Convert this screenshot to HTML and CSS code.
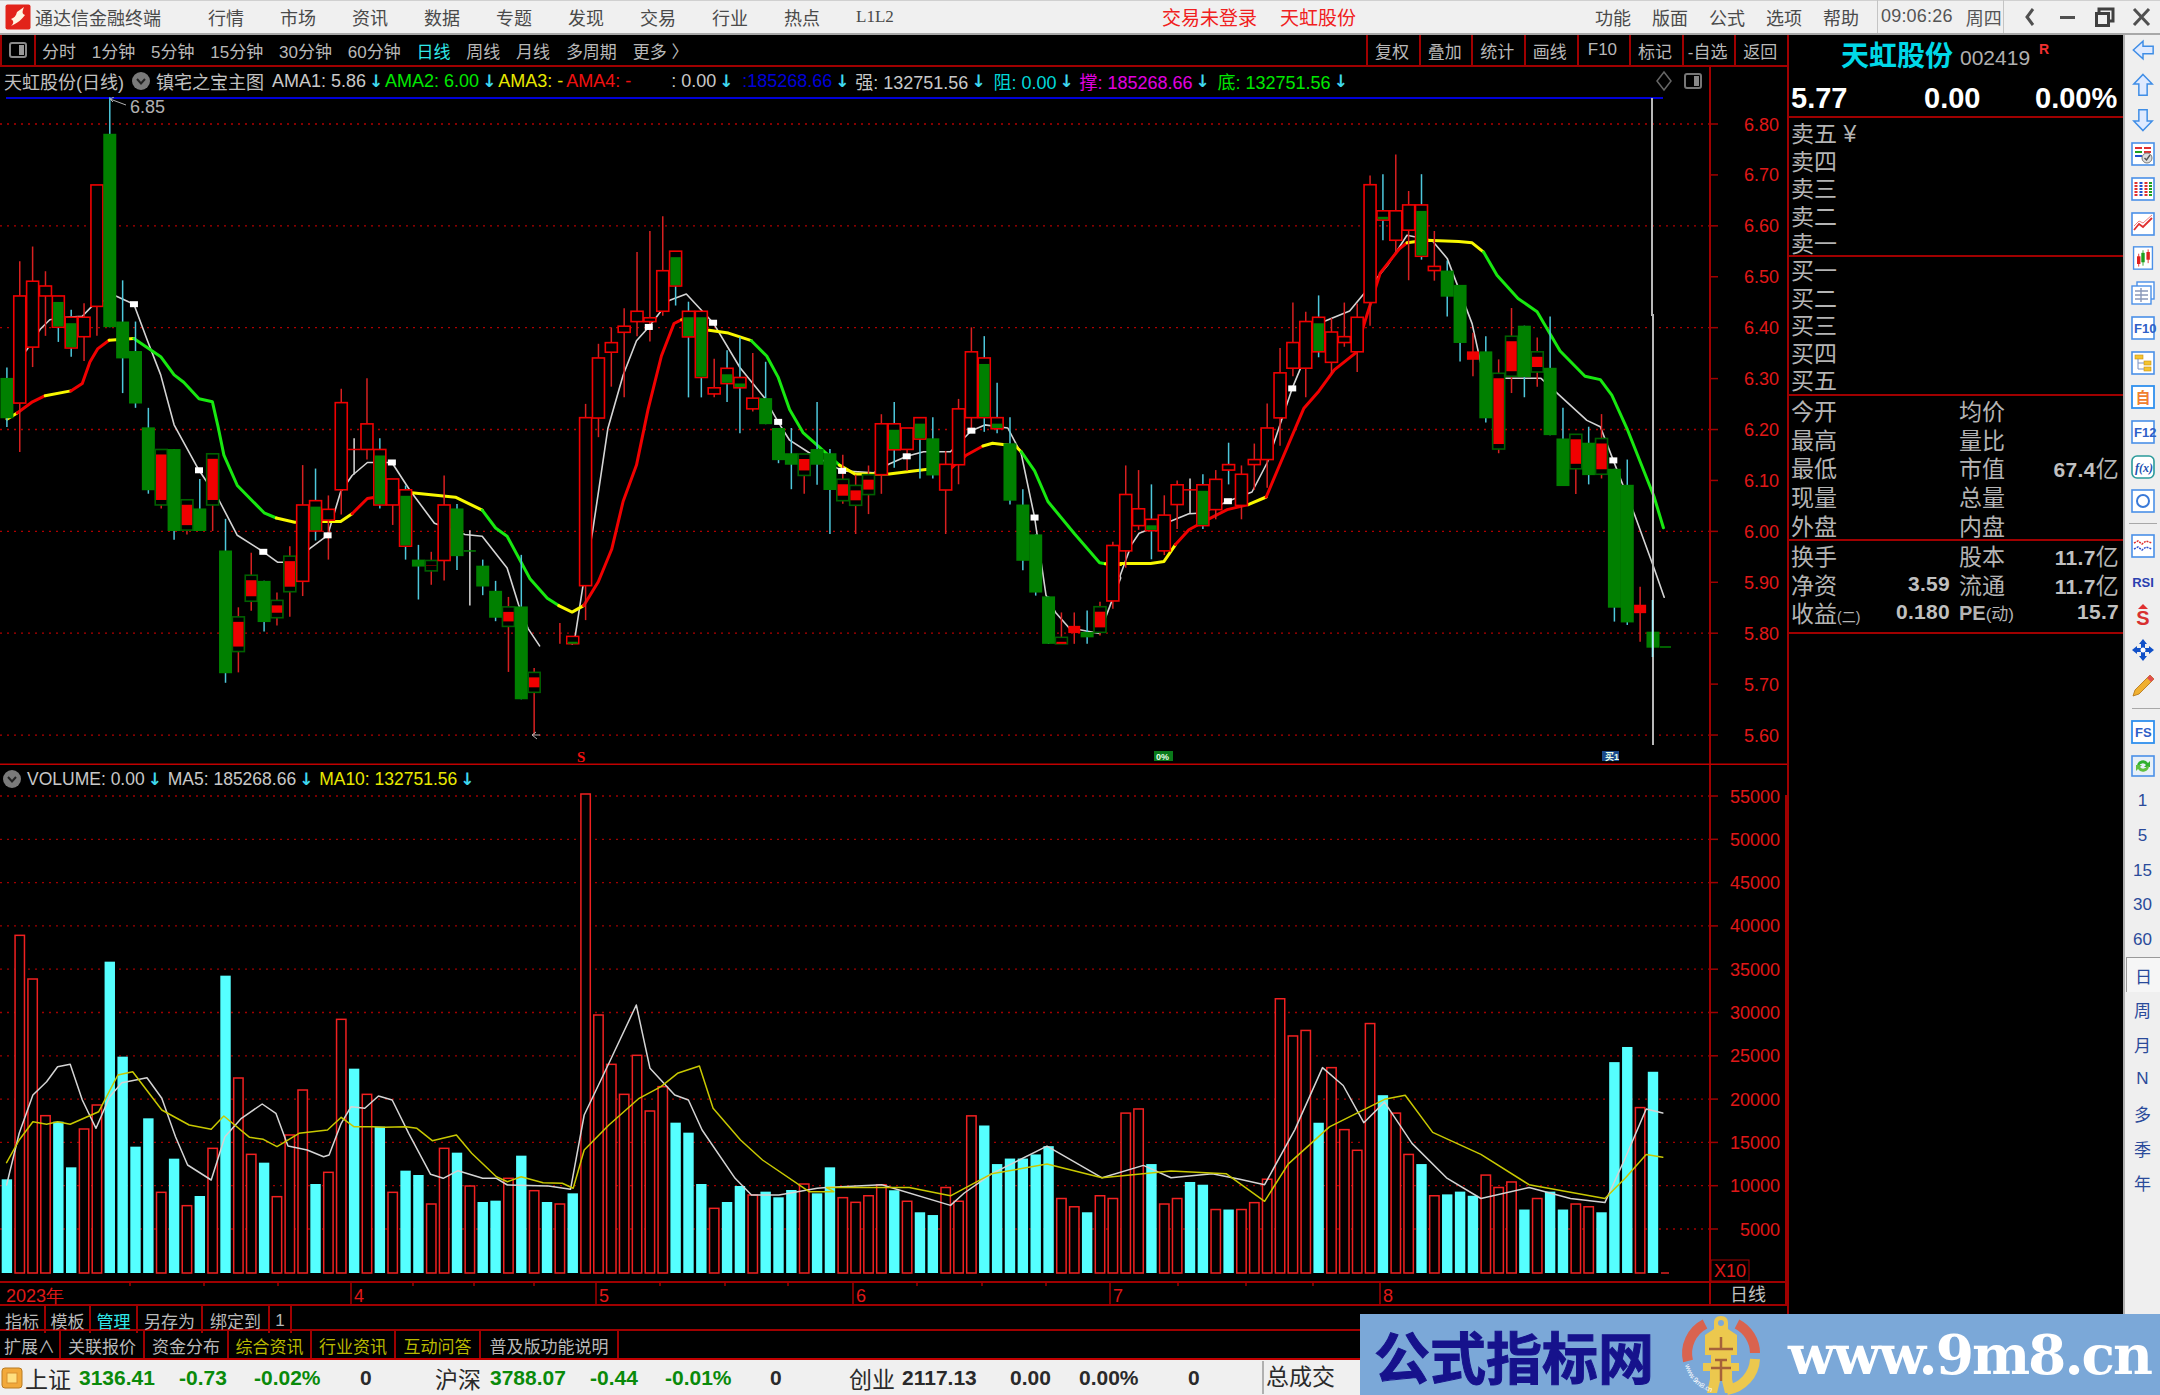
FILE: index.html
```html
<!DOCTYPE html>
<html lang="zh">
<head>
<meta charset="utf-8">
<title>通达信金融终端</title>
<link rel="stylesheet" href="styles.css">
</head>
<body>
<div class="app">
  <header class="titlebar">
    <svg class="applogo" viewBox="0 0 26 26"><rect x="0.5" y="0.5" width="25" height="25" rx="2" fill="#e2231a"/><path d="M6 15 C9 14 11 12 12 8 L19 3 C17 8 17 10 20 11 C17 15 13 19 6 22 C9 19 9 17 6 15Z" fill="#fff4e0"/></svg>
    <span class="brand">通达信金融终端</span>
    <nav class="menu">
      <span>行情</span><span>市场</span><span>资讯</span><span>数据</span><span>专题</span><span>发现</span><span>交易</span><span>行业</span><span>热点</span><span class="serif">L1L2</span>
    </nav>
    <div class="redinfo"><span>交易未登录</span><span>天虹股份</span></div>
    <nav class="menu2"><span>功能</span><span>版面</span><span>公式</span><span>选项</span><span>帮助</span></nav>
    <div class="clock"><span>09:06:26</span><span>周四</span></div>
    <div class="winctl">
      <svg viewBox="0 0 37 30"><path d="M21 7 L15 15 L21 23" fill="none" stroke="#505050" stroke-width="3"/></svg>
      <svg viewBox="0 0 37 30"><rect x="11" y="14" width="15" height="3" fill="#505050"/></svg>
      <svg viewBox="0 0 37 30"><path d="M13 11 V7 H27 V19 H23" fill="none" stroke="#404040" stroke-width="3"/><rect x="10.5" y="11.5" width="12" height="12" fill="none" stroke="#404040" stroke-width="3"/></svg>
      <svg viewBox="0 0 37 30"><path d="M11 7 L26 23 M26 7 L11 23" fill="none" stroke="#505050" stroke-width="3"/></svg>
    </div>
  </header>

  <div class="workspace">
    <section class="left">
      <div class="periodbar">
        <div class="toggle"><svg viewBox="0 0 20 20"><rect x="2" y="3" width="16" height="14" rx="2" fill="none" stroke="#8a8a8a" stroke-width="2"/><rect x="11" y="5" width="5" height="10" fill="#9a9a9a"/></svg></div>
        <div class="periods">
          <span>分时</span><span>1分钟</span><span>5分钟</span><span>15分钟</span><span>30分钟</span><span>60分钟</span><span class="on">日线</span><span>周线</span><span>月线</span><span>多周期</span><span>更多 〉</span>
        </div>
        <div class="tools"><span>复权</span><span>叠加</span><span>统计</span><span>画线</span><span>F10</span><span>标记</span><span>-自选</span><span>返回</span></div>
      </div>

      <div class="hdr">
        <span class="stock">天虹股份(日线)</span>
        <svg class="chev" viewBox="0 0 18 18"><circle cx="9" cy="9" r="9" fill="#7a7a7a"/><path d="M5 7 L9 11.5 L13 7" fill="none" stroke="#222" stroke-width="2"/></svg>
        <span class="stock s2">镇宅之宝主图</span>
        <span class="ind m8 grey">AMA1: 5.86<i class="dn">↓</i></span>
        <span class="ind m8 lime">AMA2: 6.00<i class="dn">↓</i></span>
        <span class="ind m8 yel">AMA3: -</span>
        <span class="ind m3 red">AMA4: -</span>
        <span class="ind m40 grey">: 0.00<i class="dn">↓</i></span>
        <span class="ind m15 blue">:185268.66<i class="dn">↓</i></span>
        <span class="ind m12 grey">强: 132751.56<i class="dn">↓</i></span>
        <span class="ind m14 cyan">阻: 0.00<i class="dn">↓</i></span>
        <span class="ind m12 mag">撑: 185268.66<i class="dn">↓</i></span>
        <span class="ind m14 lime">底: 132751.56<i class="dn">↓</i></span>
        <span class="hdrtools">
          <svg viewBox="0 0 18 22" class="dia"><path d="M9 2 L16 11 L9 20 L2 11 Z" fill="none" stroke="#666" stroke-width="1.5"/></svg>
          <svg viewBox="0 0 20 20" class="pane"><rect x="2" y="3" width="16" height="14" rx="2" fill="none" stroke="#777" stroke-width="2"/><rect x="11" y="5" width="5" height="10" fill="#888"/></svg>
        </span>
      </div>

      <svg class="pricepane" id="price" viewBox="0 97 1787 668" width="1787" height="668"></svg>

      <div class="hdr volhdr">
        <svg class="chev c1" viewBox="0 0 18 18"><circle cx="9" cy="9" r="9" fill="#7a7a7a"/><path d="M5 7 L9 11.5 L13 7" fill="none" stroke="#222" stroke-width="2"/></svg>
        <span class="ind m6 grey">VOLUME: 0.00<i class="dn">↓</i></span>
        <span class="ind m12 grey">MA5: 185268.66<i class="dn">↓</i></span>
        <span class="ind m12 yel">MA10: 132751.56<i class="dn">↓</i></span>
      </div>

      <svg class="volpane" id="vol" viewBox="0 795 1787 511" width="1787" height="511"></svg>

      <div class="tabs tabs1">
        <span>指标</span><span>模板</span><span class="act">管理</span><span>另存为</span><span>绑定到</span><span>1</span>
      </div>
      <div class="tabs tabs2">
        <span>扩展∧</span><span>关联报价</span><span>资金分布</span><span class="ol">综合资讯</span><span class="ol">行业资讯</span><span class="ol">互动问答</span><span>普及版功能说明</span>
      </div>
    </section>

    <aside class="panel">
      <div class="ptitle"><span class="pname">天虹股份</span><span class="pcode">002419</span><span class="pr">R</span></div>
      <div class="pquote psec"><span>5.77</span><span>0.00</span><span>0.00%</span></div>
      <div class="psec plist sell"><div>卖五 <span class="yen">¥</span></div><div>卖四</div><div>卖三</div><div>卖二</div><div>卖一</div></div>
      <div class="psec plist buy"><div>买一</div><div>买二</div><div>买三</div><div>买四</div><div>买五</div></div>
      <div class="psec pinfo">
        <span>今开</span><b></b><span>均价</span><b></b>
        <span>最高</span><b></b><span>量比</span><b></b>
        <span>最低</span><b></b><span>市值</span><b>67.4<em>亿</em></b>
        <span>现量</span><b></b><span>总量</span><b></b>
        <span>外盘</span><b></b><span>内盘</span><b></b>
      </div>
      <div class="psec pinfo last">
        <span>换手</span><b></b><span>股本</span><b>11.7<em>亿</em></b>
        <span>净资</span><b>3.59</b><span>流通</span><b>11.7<em>亿</em></b>
        <span>收益<small class="par">(二)</small></span><b>0.180</b><span class="pe">PE<small class="par2">(动)</small></span><b>15.7</b>
      </div>
    </aside>

    <aside class="sidebar">
      <div class="ti"><svg class="ic" viewBox="0 0 24 26"><path d="M1.5 13 L12 3.5 V9 H23 V17 H12 V22.5 Z" fill="#dfeaff" stroke="#3f8de6" stroke-width="1.6"/></svg></div>
      <div class="ti"><svg class="ic" viewBox="0 0 24 26"><path d="M12 1.5 L22 12 H16.5 V24 H7.5 V12 H2 Z" fill="#dfeaff" stroke="#3f8de6" stroke-width="1.6"/></svg></div>
      <div class="ti"><svg class="ic" viewBox="0 0 24 26"><path d="M12 24.5 L22 14 H16.5 V2 H7.5 V14 H2 Z" fill="#dfeaff" stroke="#3f8de6" stroke-width="1.6"/></svg></div>
      <div class="ti"><svg class="ic" viewBox="0 0 24 24"><rect x="1" y="1" width="22" height="22" fill="#fff" stroke="#4a90e8" stroke-width="1.6"/><path d="M4 6 H11 M13 6 H20" stroke="#e03030" stroke-width="2"/><path d="M4 10 H11" stroke="#20a020" stroke-width="2"/><path d="M13 10 H20" stroke="#e03030" stroke-width="2"/><path d="M4 14 H11" stroke="#2050d0" stroke-width="2"/><circle cx="16" cy="16" r="5" fill="#ddd" stroke="#777"/><path d="M13.5 16 L15.5 18 L19 13" fill="none" stroke="#555" stroke-width="1.4"/></svg></div>
      <div class="ti"><svg class="ic" viewBox="0 0 24 24"><rect x="1" y="1" width="22" height="22" fill="#fff" stroke="#4a90e8" stroke-width="1.6"/><path d="M5 5 V19" stroke="#e03030" stroke-width="3" stroke-dasharray="2 1"/><path d="M10 5 V19" stroke="#2050d0" stroke-width="3" stroke-dasharray="2 1"/><path d="M15 5 V19" stroke="#e03030" stroke-width="3" stroke-dasharray="2 1"/><path d="M19.500 5 V19" stroke="#20a020" stroke-width="3" stroke-dasharray="2 1"/></svg></div>
      <div class="ti"><svg class="ic" viewBox="0 0 24 24"><rect x="1" y="1" width="22" height="22" fill="#fff" stroke="#4a90e8" stroke-width="1.6"/><path d="M3 18 L8 12 L12 15 L21 6" fill="none" stroke="#e03030" stroke-width="1.8"/><path d="M3 14 L8 9 L12 11 L21 3" fill="none" stroke="#f08080" stroke-width="1"/></svg></div>
      <div class="ti"><svg class="ic" viewBox="0 0 24 28"><rect x="1" y="1" width="22" height="26" fill="#fff" stroke="#4a90e8" stroke-width="1.6"/><rect x="5" y="12" width="4" height="9" fill="#e02020"/><path d="M7 9 V24" stroke="#e02020"/><rect x="10" y="8" width="4" height="11" fill="#20a020"/><path d="M12 5 V23" stroke="#20a020"/><rect x="16" y="7" width="4" height="9" fill="#e02020"/><path d="M18 4 V20" stroke="#e02020"/></svg></div>
      <div class="ti"><svg class="ic" viewBox="0 0 24 24"><rect x="6" y="1" width="17" height="17" fill="#fff" stroke="#4a90e8" stroke-width="1.4"/><rect x="1" y="5" width="19" height="18" fill="#fff" stroke="#4a90e8" stroke-width="1.4"/><path d="M4 10 H17 M4 14 H17 M4 18 H17 M10 7 V21" stroke="#8a98b8" stroke-width="1.4"/></svg></div>
      <div class="ti"><svg class="ic" viewBox="0 0 24 24"><rect x="1" y="1" width="22" height="22" fill="#fff" stroke="#4a90e8" stroke-width="1.6"/><text x="3" y="17" class="ictext">F10</text></svg></div>
      <div class="ti"><svg class="ic" viewBox="0 0 24 24"><rect x="1" y="1" width="22" height="22" fill="#fff" stroke="#4a90e8" stroke-width="1.6"/><rect x="4" y="4" width="8" height="4" fill="#f4c430" stroke="#c89010" stroke-width=".6"/><rect x="13" y="10" width="7" height="4" fill="#f4c430" stroke="#c89010" stroke-width=".6"/><rect x="13" y="16" width="7" height="4" fill="#f4c430" stroke="#c89010" stroke-width=".6"/><path d="M7 8 V18 H13 M7 12 H13" fill="none" stroke="#7a90c0"/></svg></div>
      <div class="ti"><svg class="ic" viewBox="0 0 24 24"><rect x="1" y="1" width="22" height="22" fill="#fff" stroke="#2f90ee" stroke-width="1.8"/><text x="12" y="18" class="icself">自</text></svg></div>
      <div class="ti"><svg class="ic" viewBox="0 0 24 24"><rect x="1" y="1" width="22" height="22" fill="#fff" stroke="#4a90e8" stroke-width="1.6"/><text x="3" y="17" class="ictext">F12</text></svg></div>
      <div class="ti"><svg class="ic" viewBox="0 0 24 24"><rect x="1" y="1" width="22" height="22" rx="5" fill="#fff" stroke="#2a9a9a" stroke-width="1.6"/><text x="4" y="17" class="icfx">f(x)</text></svg></div>
      <div class="ti"><svg class="ic" viewBox="0 0 24 24"><rect x="1" y="1" width="22" height="22" fill="#fff" stroke="#4a90e8" stroke-width="1.6"/><circle cx="12" cy="12" r="6" fill="none" stroke="#3a7ad8" stroke-width="2"/></svg></div>
      <div class="tsep s1"></div>
      <div class="ti"><svg class="ic" viewBox="0 0 24 24"><rect x="1" y="1" width="22" height="22" fill="#fff" stroke="#4a90e8" stroke-width="1.6"/><path d="M3 9 L7 7 L11 10 L15 7 L21 9" fill="none" stroke="#e03030" stroke-width="1.5" stroke-dasharray="2 1"/><path d="M3 15 L7 13 L11 16 L15 13 L21 15" fill="none" stroke="#3050d0" stroke-width="1.5" stroke-dasharray="2 1"/></svg></div>
      <div class="ti"><svg class="ic" viewBox="0 0 24 24"><text x="12" y="18" class="icrsi">RSI</text></svg></div>
      <div class="ti"><svg class="ic" viewBox="0 0 24 24"><path d="M12 1 L17 6 H7 Z" fill="#e03030"/><text x="12" y="22" class="ics">S</text></svg></div>
      <div class="ti"><svg class="ic" viewBox="0 0 24 24"><path d="M12 1 L16 6 H14 V10 H18 V8 L23 12 L18 16 V14 H14 V18 H16 L12 23 L8 18 H10 V14 H6 V16 L1 12 L6 8 V10 H10 V6 H8 Z" fill="#1050c8"/><circle cx="12" cy="12" r="2.500" fill="#fff"/></svg></div>
      <div class="ti"><svg class="ic" viewBox="0 0 24 24"><path d="M19 2 L23 6 L8 21 L2 23 L4 17 Z" fill="#f0b030" stroke="#b07010" stroke-width=".8"/><path d="M19 2 L23 6 L20 9 L16 5 Z" fill="#e05050"/></svg></div>
      <div class="tsep s2"></div>
      <div class="ti"><svg class="ic" viewBox="0 0 24 24"><rect x="1" y="1" width="22" height="22" fill="#fff" stroke="#2f90ee" stroke-width="1.8"/><text x="4" y="17" class="ictext">FS</text></svg></div>
      <div class="ti"><svg class="ic" viewBox="0 0 24 24"><rect x="1" y="1" width="22" height="20" fill="#e8f0f8" stroke="#4a90e8" stroke-width="1.6"/><path d="M6 11 A6 6 0 0 1 17 8 L19 6 V12 H13 L15 10 A4 4 0 0 0 8 11 Z" fill="#30b030"/><path d="M18 11 A6 6 0 0 1 7 14 L5 16 V10 H11 L9 12 A4 4 0 0 0 16 11 Z" fill="#60c040"/></svg></div>
      <div class="ti txt">1</div><div class="ti txt">5</div><div class="ti txt">15</div><div class="ti txt">30</div><div class="ti txt">60</div>
      <div class="ti txt day">日</div><div class="ti txt">周</div><div class="ti txt">月</div><div class="ti txt">N</div><div class="ti txt">多</div><div class="ti txt">季</div><div class="ti txt">年</div>
    </aside>
  </div>

  <footer class="status">
    <svg class="sicon" viewBox="0 0 22 22"><rect x="1" y="1" width="20" height="20" rx="3" fill="#f2a93a" stroke="#b87a20"/><rect x="6" y="6" width="10" height="10" fill="#ffe080" stroke="#d89030"/></svg>
    <span class="nm">上证</span><span class="up">3136.41</span><span class="up">-0.73</span><span class="up">-0.02%</span><span class="dk">0</span>
    <span class="nm">沪深</span><span class="up">3788.07</span><span class="up">-0.44</span><span class="up">-0.01%</span><span class="dk">0</span>
    <span class="nm">创业</span><span class="dk">2117.13</span><span class="dk">0.00</span><span class="dk">0.00%</span><span class="dk">0</span>
    <span class="nm tot">总成交</span>
  </footer>

  <div class="watermark">
    <span class="wmtitle">公式指标网</span>
    <svg class="wmlogo" viewBox="0 0 80 80">
      <path d="M7 46 A33 33 0 0 1 24 9" fill="none" stroke="#d9634f" stroke-width="10"/>
      <path d="M56 9 A33 33 0 0 1 74 38" fill="none" stroke="#d9634f" stroke-width="10"/>
      <path d="M74 44 A33 33 0 0 1 46 75" fill="none" stroke="#ecc84e" stroke-width="10"/>
      <path d="M40 1 C35 1 33 4 33 8 V14 L24 20 V40 H30 V48 H22 V56 H29 V64 L26 78 H36 L40 62 L44 78 H54 L51 64 V56 H58 V48 H50 V40 H56 V20 L47 14 V8 C47 4 45 1 40 1Z" fill="#ecc84e"/>
      <circle cx="40" cy="8" r="3" fill="#7ba8d8"/>
      <path d="M28 34 H52 M40 22 V34 M34 45 H46 M30 53 H50 M40 45 V66" fill="none" stroke="#a5623a" stroke-width="2.500"/>
      <path id="wmarc" d="M4 50 A37 37 0 0 0 30 77" fill="none"/>
      <text class="wmsmall"><textPath href="#wmarc">www.9m8.cn</textPath></text>
    </svg>
    <span class="wmurl">www.9m8.cn</span>
  </div>
</div>
<script src="chart.js"></script>
</body>
</html>
```
FILE: styles.css
```css
html,body{margin:0;padding:0;background:#000;}
.app{position:relative;width:2160px;height:1395px;overflow:hidden;background:#000;font-family:"Liberation Sans","Noto Sans CJK SC",sans-serif;font-size:18px;color:#c0c0c0;}
svg{display:block;}

.titlebar{display:flex;align-items:center;box-sizing:border-box;height:35px;padding-bottom:1px;background:#f0f0f0;border-top:1px solid #d0d0d0;border-bottom:2px solid #a8a8a8;color:#4a4a4a;font-size:18px;white-space:nowrap;}
.applogo{width:26px;height:26px;margin-left:5px;flex:none;}
.brand{margin-left:4px;width:126px;}
.menu{display:flex;align-items:center;gap:36px;margin-left:47px;width:684px;}
.menu span{width:36px;}
.serif{font-family:"Liberation Serif",serif;font-size:17px;}
.redinfo{display:flex;gap:23px;margin-left:270px;color:#f02020;font-size:19px;}
.menu2{display:flex;gap:21px;margin-left:auto;}
.clock{display:flex;align-items:center;gap:13px;margin-left:18px;height:33px;border-left:1px solid #c4c4c4;border-right:1px solid #c4c4c4;padding:0 3px;color:#555;width:119px;box-sizing:content-box;}
.clock span:first-child{letter-spacing:.2px;}
.winctl{display:flex;margin-left:8px;}
.winctl svg{width:37px;height:30px;}

.workspace{display:flex;height:1325px;}
.left{width:1787px;flex:none;}
.periodbar{display:flex;box-sizing:border-box;height:32px;border-bottom:2px solid #a00000;}
.toggle{box-sizing:border-box;width:36px;border-left:2px solid #a00000;border-right:2px solid #a00000;display:flex;align-items:center;justify-content:center;}
.toggle svg{width:20px;height:20px;}
.periods{display:flex;gap:15.800px;margin-left:6px;align-items:center;font-size:17px;color:#b8b8b8;white-space:nowrap;}
.periods .on{color:#30e8e8;}
.tools{display:flex;margin-left:auto;font-size:17px;color:#b8b8b8;}
.tools span{box-sizing:border-box;width:52.6px;padding-right:3px;border-left:2px solid #a00000;display:flex;align-items:center;justify-content:center;white-space:nowrap;}

.hdr{display:flex;align-items:center;box-sizing:border-box;width:1711px;height:30px;border-right:2px solid #a00000;font-size:18px;white-space:nowrap;padding-left:4px;padding-bottom:2px;}
.stock{color:#c0c0c0;}
.s2{margin-left:6px;}
.chev{width:18px;height:18px;margin-left:8px;flex:none;}
.chev.c1{margin-left:-1px;}
.ind{display:flex;align-items:center;}
.dn{font-style:normal;font-weight:bold;color:#3fd8ee;width:8px;margin-left:3px;font-family:"DejaVu Sans",sans-serif;font-size:17px;text-align:center;}
.m3{margin-left:3px;}.m6{margin-left:6px;}.m8{margin-left:8px;}.m12{margin-left:12px;}.m14{margin-left:14px;}.m15{margin-left:15px;}.m40{margin-left:40px;}
.grey{color:#c8c8c8;}.lime{color:#00e800;}.yel{color:#e8e800;}.red{color:#f01010;}.blue{color:#0000d8;}.cyan{color:#00d8d8;}.mag{color:#e000e0;}
.hdrtools{display:flex;align-items:center;gap:10px;margin-left:auto;margin-right:6px;}
.dia{width:18px;height:22px;}
.pane{width:20px;height:20px;}
.pricepane{background:#000;}
.volpane{background:#000;overflow:visible;}
.volhdr{font-size:17.500px;}

.axis{fill:#e01818;font-size:18px;font-family:"Liberation Sans",sans-serif;}
.sig{font-family:"Liberation Serif",serif;font-weight:bold;font-size:15px;fill:#f01010;}
.lbl{fill:#b0b0b0;font-size:18px;font-family:"Liberation Sans",sans-serif;}
.tag{fill:#e8ffe8;font-size:9px;font-weight:bold;font-family:"Liberation Sans","Noto Sans CJK SC",sans-serif;}
.dayl{fill:#c0c0c0;font-size:18px;font-family:"Noto Sans CJK SC",sans-serif;}

.tabs{display:grid;box-sizing:border-box;border-bottom:2px solid #a00000;font-size:17px;color:#b8b8b8;white-space:nowrap;}
.tabs span{box-sizing:border-box;padding-top:2px;border-right:2px solid #a00000;display:flex;align-items:center;justify-content:center;}
.tabs1{height:25px;grid-template-columns:46px 45px 47px 65px 67px 22px;}
.tabs2{height:29px;grid-template-columns:61px 84px 84px 83px 84px 85px 138px;border-bottom-color:#c00000;}
.tabs .act{color:#30e8e8;}
.tabs .ol{color:#b8b800;}

.panel{box-sizing:border-box;width:336px;flex:none;border-left:2px solid #a00000;font-size:23px;color:#b4b4b4;}
.ptitle{display:flex;align-items:center;box-sizing:border-box;height:47px;padding-left:52px;padding-bottom:9px;white-space:nowrap;}
.pname{font-size:28px;font-weight:bold;color:#00d8e8;}
.pcode{font-size:21px;margin-left:7px;margin-top:8px;color:#b0b0b0;}
.pr{font-size:14px;font-weight:bold;color:#f03030;margin-left:9px;margin-top:-10px;}
.psec{box-sizing:border-box;border-bottom:2px solid #a00000;}
.pquote{display:grid;grid-template-columns:133px 111px 84px;height:36px;align-items:center;padding-left:2px;padding-bottom:2px;font-size:29px;font-weight:bold;color:#fff;}
.plist{height:139px;padding-left:2px;}
.sell{padding-top:3px;}
.buy{padding-top:1px;}
.plist div{height:27.500px;line-height:27.500px;}
.yen{color:#b4b4b4;}
.pinfo{display:grid;grid-template-columns:60px 99px 9px 60px 100px;grid-auto-rows:28.600px;align-items:center;padding-left:2px;height:145px;white-space:nowrap;}
.pinfo.last{height:93px;}
.pinfo span:nth-of-type(even){grid-column:4;}
.pinfo b{text-align:right;font-size:21px;color:#c0c0c0;letter-spacing:.3px;}
.pinfo b em{font-style:normal;font-weight:normal;font-size:23px;color:#b4b4b4;}
.par{font-size:14px;}
.pe{font-weight:bold;font-size:20px;}
.par2{font-size:17px;font-weight:normal;}

.sidebar{box-sizing:border-box;width:37px;flex:none;background:#efefef;border-left:2px solid #b0b0b0;}
.ti{height:34.700px;display:flex;align-items:center;justify-content:center;}
.ti:first-child{margin-top:-2px;}
.ic{width:24px;height:24px;overflow:visible;}
.tsep{display:flex;align-items:center;}
.tsep::after{content:"";display:block;width:28px;height:1px;margin:0 auto;background:#a8a8a8;}
.tsep.s1{height:10px;}
.tsep.s2{height:12.600px;}
.txt{color:#2a4a9a;font-size:17px;}
.day{background:#f6f6f6;border-top:1px solid #999;border-left:1px solid #999;box-sizing:border-box;margin-left:1px;}
.ictext{font-size:13px;font-weight:bold;fill:#2f60c8;font-family:"Liberation Sans",sans-serif;}
.icself{font-size:15px;font-weight:bold;fill:#f08030;text-anchor:middle;font-family:"Noto Sans CJK SC",sans-serif;}
.icfx{font-size:12px;font-style:italic;font-weight:bold;fill:#2050b0;font-family:"Liberation Serif",serif;}
.icrsi{font-size:13px;font-weight:bold;fill:#2a40b0;text-anchor:middle;font-family:"Liberation Sans",sans-serif;}
.ics{font-size:20px;font-weight:bold;fill:#d83030;text-anchor:middle;font-family:"Liberation Sans",sans-serif;}

.status{display:grid;grid-template-columns:25px 54px 100px 75px 106px 75px 55px 100px 75px 105px 79px 53px 108px 69px 109px 74px 1fr;align-items:center;height:35px;background:#f0f0f0;box-sizing:border-box;font-size:21px;font-weight:bold;white-space:nowrap;}
.sicon{width:22px;height:22px;margin-left:1px;}
.status .nm{font-size:23px;font-weight:normal;color:#2a2a2a;}
.up{color:#0a8a0a;}
.dk{color:#2a2a2a;}
.status .tot{border-left:2px solid #b0b0b0;padding-left:2px;height:33px;line-height:33px;}

.watermark{position:absolute;left:1360px;top:1314px;width:800px;height:81px;background:#7ba8d8;display:flex;align-items:center;white-space:nowrap;}
.wmtitle{font-family:"Noto Sans CJK SC",sans-serif;font-weight:bold;font-size:56px;line-height:81px;color:#16128c;margin-left:14px;-webkit-text-stroke:1px #16128c;}
.wmlogo{width:80px;height:80px;margin-left:27px;flex:none;overflow:visible;}
.wmsmall{font-size:7px;fill:#fff;font-family:"Liberation Sans",sans-serif;}
.wmurl{font-family:"DejaVu Serif",serif;font-weight:bold;font-size:55px;letter-spacing:-2px;color:#fff;margin-left:27px;line-height:81px;}
```
FILE: chart.js
```js
(function(){
var NS='http://www.w3.org/2000/svg';
function el(p,n,a,t){var e=document.createElementNS(NS,n);for(var k in a)e.setAttribute(k,a[k]);if(t!==undefined)e.textContent=t;p.appendChild(e);return e;}
var X=function(i){return 6.9+12.86*i;};
var zooms={
  a:{x:function(z){return z/2.613;},y:function(z){return 80+z/2.306;}},
  b:{x:function(z){return 560+z/2.613;},y:function(z){return 180+z/2.613;}},
  c:{x:function(z){return 1120+z/2.613;},y:function(z){return 130+z/2.376;}}
};
function pts(zk,arr){var z=zooms[zk],o=[];for(var i=0;i<arr.length;i+=2)o.push(z.x(arr[i]).toFixed(1)+','+z.y(arr[i+1]).toFixed(1));return o;}

/* candles: type, body top, body bottom, wick top, wick bottom */
var A=[['g',687,780,663,800],['r',498,745,418,858],['r',464,616,384,662],['r',475,498,441,590],['m',498,570,498,604],['m',547,618,530,638],['r',547,592,515,648],['r',242,522,242,590],['g',124,570,40,570],['g',557,642,462,722],['g',625,746,557,756],['g',801,946,756,954],['x',852,980,852,988],['g',851,1040,851,1060],['x',968,1038,968,1048],['g',988,1040,920,1040],['x',862,980,862,1040],['g',1085,1368,1012,1390],['x',1238,1318,1216,1366],['x',1142,1202,1090,1224],['g',1155,1250,1155,1272],['x',1200,1240,1182,1258],['x',1098,1180,1075,1238],['r',980,1156,888,1190],['m',970,1040,896,1062],['r',990,1015,958,1106],['r',744,945,712,1002],['dr',852,852,826,910],['r',793,852,688,875],['m',852,980,826,988],['r',920,980,920,1026],['m',945,1075,935,1106],['g',1106,1122,1072,1198],['x',1108,1132,1088,1164],['r',980,1108,912,1154],['g',988,1098,978,1130],['dg',1086,1086,1038,1212],['g',1120,1168,1106,1188],['g',1178,1240,1155,1248],['x',1215,1260,1192,1365],['g',1214,1428,1095,1428],['x',1366,1412,1356,1510],null,['w',1252,1300,1252,1300],['e',1283,1300,1283,1300]];
var B=[['r',621,1060,585,1150],['r',465,622,428,672],['r',425,450,385,540],['r',382,398,335,568],['r',343,370,188,408],['r',360,370,133,422],['r',237,343,95,355],['m',186,277,186,328],['m',343,410,318,568],['m',343,516,343,568],['r',543,559,467,568],['m',492,532,445,580],['m',516,543,410,662],['r',570,598,452,605],['g',570,638,475,638],['g',648,732,648,740],['g',714,744,648,808],['x',716,772,716,820],['g',703,744,580,796],['g',714,810,703,925],['x',782,838,718,846],['x',798,850,770,925],['x',770,822,746,873],['r',637,770,612,820],['m',637,705,580,752],['r',648,704,648,760],['m',621,677,621,780],['g',675,772,620,780],['r',743,810,708,925],['r',598,744,572,795],['r',449,621,385,655],['m',465,621,408,658],['m',621,650,530,662],['g',688,838,620,848],['g',848,995,808,1020],['g',926,1078,926,1086],['g',1088,1212,1088,1212],['e2',1195,1212,1130,1212],['f',1165,1184,1130,1212],['g',1181,1195,1125,1212],['x',1115,1182,1102,1190],['r',955,1100,945,1120]];
var C=[['r',866,1000,797,1040],['r',900,940,808,950],['m',925,952,842,1020],['r',915,1000,868,1010],['r',843,890,833,948],['dr',855,855,828,912],['m',843,940,818,948],['r',830,902,808,925],['m',795,808,743,842],['r',818,892,797,925],['r',783,795,745,855],['r',708,783,650,850],['r',577,684,518,750],['r',505,566,410,585],['r',455,566,432,635],['m',445,527,393,540],['r',480,552,447,578],['r',491,505,410,515],['r',445,527,412,575],['r',130,410,108,465],['m',192,214,105,262],['r',192,262,58,290],['r',178,238,145,357],['m',178,300,105,308],['r',324,334,240,358],['g',334,396,310,443],['g',368,506,368,550],['f',526,546,482,585],['g',526,685,490,695],['x',578,758,545,768],['x',490,585,423,625],['g',465,587,465,635],['x',527,575,493,610],['g',565,725,443,725],['g',733,846,660,846],['x',723,805,723,865],['g',743,820,705,842],['x',733,818,675,828],['g',805,1135,805,1168],['g',843,1170,783,1176],['f',1128,1148,1085,1216],['g',1192,1230,1118,1252]];

function drawCandle(g,i,c,zk){
  var z=zooms[zk].y,t=c[0],x=X(i),top=z(c[1]),bot=z(c[2]),wt=z(c[3]),wb=z(c[4]);
  var RED='#f00000',GRN='#008000',CY='#4ec8dc',WK='#d82020',DG='#006000';
  var w=12,h=Math.max(bot-top,0);
  if(t==='dr'||t==='dg'){
    el(g,'line',{x1:x,x2:x,y1:wt,y2:wb,stroke:'#d8d8d8','stroke-width':1.5});
    el(g,'line',{x1:x-6,x2:x+6,y1:top,y2:top,stroke:t==='dr'?RED:GRN,'stroke-width':1.5});
    return;
  }
  if(t==='w'){el(g,'line',{x1:x,x2:x,y1:wt,y2:wb,stroke:WK,'stroke-width':1.5});return;}
  var wc=(t==='g'||t==='m')?CY:WK;
  el(g,'line',{x1:x,x2:x,y1:wt,y2:wb,stroke:wc,'stroke-width':1.5});
  if(t==='g'){el(g,'rect',{x:x-6.5,y:top,width:13,height:h,fill:GRN});}
  else if(t==='f'){el(g,'rect',{x:x-6,y:top,width:12,height:h,fill:RED});}
  else if(t==='r'){el(g,'rect',{x:x-w/2,y:top,width:w,height:h,fill:'#000',stroke:RED,'stroke-width':1.6});}
  else if(t==='m'){
    el(g,'rect',{x:x-w/2,y:top,width:w,height:h,fill:'#000',stroke:RED,'stroke-width':1.6});
    el(g,'rect',{x:x-w/2+.8,y:top+6,width:w-1.6,height:Math.max(h-6.8,0),fill:GRN});
  }else if(t==='x'){
    el(g,'rect',{x:x-w/2,y:top,width:w,height:h,fill:'#000',stroke:DG,'stroke-width':1.6});
    el(g,'rect',{x:x-w/2+.8,y:top+5,width:w-1.6,height:Math.max(h-10,0),fill:RED});
  }else if(t==='e'||t==='e2'){
    el(g,'rect',{x:x-w/2,y:top,width:w,height:h,fill:'#000',stroke:t==='e'?RED:DG,'stroke-width':1.5});
    el(g,'rect',{x:x-w/2+1,y:bot-2,width:w-2,height:2,fill:t==='e'?GRN:RED});
  }
}

/* price pane */
var p=document.getElementById('price');
var labels=['6.80','6.70','6.60','6.50','6.40','6.30','6.20','6.10','6.00','5.90','5.80','5.70','5.60'];
labels.forEach(function(l,i){
  var y=124+i*50.92;
  if(i%2===0)el(p,'line',{x1:0,x2:1710,y1:y,y2:y,stroke:'#b00000','stroke-width':1.3,'stroke-dasharray':'2 5'});
  el(p,'line',{x1:1710,x2:1718,y1:y,y2:y,stroke:'#a00000','stroke-width':1.5});
  el(p,'text',{x:1744,y:y+6.5,'class':'axis'},l);
});
el(p,'line',{x1:1710,x2:1710,y1:97,y2:765,stroke:'#a00000','stroke-width':2});
el(p,'line',{x1:0,x2:1787,y1:764.5,y2:764.5,stroke:'#c00000','stroke-width':2});
el(p,'line',{x1:6,x2:1663,y1:98,y2:98,stroke:'#0000d8','stroke-width':2});

function poly(g,list,color,w){el(g,'polyline',{points:list.join(' '),fill:'none',stroke:color,'stroke-width':w,'stroke-linejoin':'round','stroke-linecap':'round'});}
var CL={r:'#f00000',y:'#f8f800',g:'#18e810'};
var thick=[
 ['a','y',[18,782,45,768]],['a','r',[45,768,85,742,118,728]],['a','y',[118,728,185,717]],['a','r',[185,717,215,700,235,650,255,620,285,600]],['a','y',[285,600,350,596]],
 ['a','g',[350,596,420,638,455,680,480,697,520,735,555,742,570,800,585,865,620,935,690,998,722,1010]],['a','y',[722,1010,770,1020,840,1018,890,1018,920,1000]],['a','r',[920,1000,960,965,1010,958]],['a','y',[1010,958,1075,952,1190,962,1260,992]],
 ['a','g',[1260,992,1295,1033,1325,1052,1385,1150,1430,1195,1460,1212]],['a','y',[1460,1212,1495,1227,1525,1212]],
 ['b','r',[62,1112,100,1050,135,965,165,840,200,745,230,600,265,460,298,375,318,365]],['b','y',[318,365,385,392,440,400,500,420]],['b','g',[500,420,540,460,570,515,600,600,635,660,680,700,730,745]],['b','y',[730,745,770,768,860,768,950,757,1025,750]],['b','r',[1025,750,1060,720,1105,695]],['b','y',[1105,695,1130,688,1190,695,1205,710]],['b','g',[1205,710,1240,760,1275,840,1345,925,1410,1000,1425,1003]],['b','y',[1425,1003,1465,1005]],
 ['c','y',[0,1030,80,1030,115,1025,145,985]],['c','r',[145,985,180,950,230,925,280,902,335,890]],['c','y',[335,890,382,872]],['c','r',[382,872,420,790,480,662,520,620,560,570,615,530,640,455,680,340,730,282,750,268]],['c','y',[750,268,800,262,885,265,920,268,950,290]],['c','g',[950,290,985,345,1040,400,1090,432,1150,525,1215,585,1255,593,1285,630,1325,710,1395,870,1420,945]]
];
var WL='#d4d4d4';
var g1=el(p,'g',{});
poly(g1,pts('a',[68,625,105,575,130,553,165,548,215,545,240,522,300,497,350,517,385,600,420,680,455,795,520,900,570,965,620,1050,688,1088,725,1112,770,1112,810,1080,856,1050,890,950,920,912,960,882,1024,882,1070,945,1135,1022,1215,1048,1260,1052,1325,1125,1355,1210,1380,1265,1410,1305]),WL,1.6);
poly(g1,pts('b',[32,1212,40,1190,60,1060,85,920,125,650,165,510,200,420,232,384,285,315,330,298,400,373,470,490,535,570,570,632,600,680,650,712,737,760,820,765,860,742,906,722,950,710,1020,710,1075,655,1110,640,1170,648,1205,715,1240,882,1270,1085,1295,1130,1330,1170,1410,1185,1440,1105,1465,1040]).concat(pts('c',[0,1060,30,985,50,958,130,930,180,912,215,910,282,882,345,860,385,790,450,614,520,460,600,430,700,320,750,250,815,262,855,305,920,460,950,585,1000,590,1100,590,1220,690,1255,705,1289,785,1345,915,1395,1040,1422,1110])),WL,1.6);
thick.forEach(function(s){poly(g1,pts(s[0],s[2]),CL[s[1]],3);});

var g2=el(p,'g',{});
A.forEach(function(c,i){if(c)drawCandle(g2,i,c,'a');});
B.forEach(function(c,i){drawCandle(g2,45+i,c,'b');});
C.forEach(function(c,i){drawCandle(g2,87+i,c,'c');});
el(g2,'line',{x1:1660,x2:1671,y1:647,y2:647,stroke:'#008000','stroke-width':1.5});

var sq=el(p,'g',{});
function square(zk,x,y){var z=zooms[zk];el(sq,'rect',{x:z.x(x)-4,y:z.y(y)-3,width:8,height:6,fill:'#fff'});}
[[350,517],[520,900],[688,1088],[856,1050],[1024,882]].forEach(function(a){square('a',a[0],a[1]);});
[[232,384],[400,373],[570,632],[737,760],[906,722],[1075,655],[1240,882]].forEach(function(a){square('b',a[0],a[1]);});
[[282,882],[450,614],[1289,785]].forEach(function(a){square('c',a[0],a[1]);});

el(p,'polyline',{points:'1652,98 1652,315 1653,315 1653,745',fill:'none',stroke:'#b8b8b8','stroke-width':2});
el(p,'line',{x1:1652.5,x2:1652.5,y1:600,y2:657,stroke:'#9ff2ff','stroke-width':1.5});
el(p,'text',{x:130,y:113,'class':'lbl'},'6.85');
el(p,'path',{d:'M126 105 L110 99 M110 99 L114 97 M110 99 L113 102',fill:'none',stroke:'#b0b0b0','stroke-width':1});
el(p,'path',{d:'M540 735 L532 735 M532 735 L536 732 M532 735 L537 739',fill:'none',stroke:'#b0b0b0','stroke-width':1});
el(p,'text',{x:577,y:762,'class':'sig'},'S');
el(p,'rect',{x:1154,y:751,width:19,height:10,fill:'#0a7a1a'});
el(p,'text',{x:1156,y:760,'class':'tag'},'0%');
el(p,'rect',{x:1602,y:751,width:17,height:10,fill:'#1a4a8a'});
el(p,'text',{x:1605,y:760,'class':'tag'},'买1');

/* volume pane */
var v=document.getElementById('vol');
var VB=1273;
var vlab=['55000','50000','45000','40000','35000','30000','25000','20000','15000','10000','5000'];
vlab.forEach(function(l,i){
  var y=796+i*43.3;
  el(v,'line',{x1:0,x2:1710,y1:y,y2:y,stroke:'#a00000','stroke-width':1.3,'stroke-dasharray':'2 5'});
  el(v,'line',{x1:1710,x2:1718,y1:y,y2:y,stroke:'#a00000','stroke-width':1.5});
  el(v,'text',{x:1780,y:y+6.5,'class':'axis','text-anchor':'end'},l);
});
/* volume: colour (c/r) and top in the 3x crop, then in the overview scale */
var V1='c1198 r466 r597 r1007 c1025 c1162 r1047 r975 c545 c830 c1100 c1015 r1237 c1136 r1277 c1248 r1105 c587 r894 r1123 c1148 r1250 r1065 r930 c1212 r1177 r718 c866 r943 c1040 r1237 c1172 c1185 r1272 r1105 c1118 r1218 c1266 c1262 r1195 c1127 r1232 c1266 r1272 c1240 r42 r705 r853 r943 r826 r993 r920 c1028 c1058 c1212 r1285 c1266 c1218 r1245 c1235 c1252 c1230 r1212 c1240 c1162 r1253 r1267'.split(' ');
var V2='r868 r860 c864 r872 c880 c882 r862 r872 r810 c817 c845 c841 c841 c838 c832 r870 r876 c880 r868 r870 r808 r805 c845 r874 r870 c858 c860 r878 c878 r878 r873 r856 r725 r752 r748 c815 r775 r820 r835 r743 c795 r808 r838 c845 r868 c867 c865 c868 r853 r862 r858 c878 r870 c865 c878 r874 r876 c880 c771 c760 r804 c778'.split(' ');
function bar(i,col,top){
  var x=X(i);
  if(col==='c')el(v,'rect',{x:x-5.2,y:top,width:10.4,height:VB-top,fill:'#55ffff'});
  else el(v,'rect',{x:x-4.7,y:top,width:9.4,height:VB-top,fill:'#000',stroke:'#f02020','stroke-width':1.5});
}
V1.forEach(function(s,i){bar(i,s[0],780+parseInt(s.slice(1))/3);});
V2.forEach(function(s,i){bar(67+i,s[0],parseInt(s.slice(1))*1.3776);});
el(v,'line',{x1:1661,x2:1669,y1:VB,y2:VB,stroke:'#e02020','stroke-width':1.5});

function vz(a){var o=[];for(var i=0;i<a.length;i+=2)o.push((a[i]/1.823).toFixed(1)+','+(780+a[i+1]/3).toFixed(1));return o;}
function vo(a){var o=[];for(var i=0;i<a.length;i+=2)o.push((a[i]*1.3776).toFixed(1)+','+(a[i+1]*1.3776).toFixed(1));return o;}
poly(v,vz([12,1215,35,1060,60,945,85,905,105,860,128,853,150,960,175,1045,200,950,222,908,268,893,295,955,320,1070,342,1155,385,1200,410,1070,440,1015,478,972,503,1000,525,1098,560,1110,590,1130,600,1125,622,1030,640,980,665,985,690,948,715,960,745,1060,785,1183,808,1195,835,1172,880,1195,905,1195,925,1215,1000,1218,1040,1228,1065,1005,1110,850,1160,675,1185,865,1230,945,1255,960,1280,1050,1340,1195,1370,1245,1420,1245,1490,1225]).concat(vo([600,862,640,860,690,875,700,866,720,852,760,832,800,855,830,846,850,855,880,852,900,856,918,860,940,820,960,775,975,788,990,815,1005,800,1025,830,1050,855,1075,870,1110,862,1140,870,1165,873,1180,840,1195,805,1207,808])),'#d4d4d4',1.5);
poly(v,vz([12,1148,35,1080,60,1025,85,1033,105,1025,128,1033,180,995,215,885,242,875,295,990,345,1035,385,1048,408,1008,455,1072,480,1078,505,1100,545,1060,597,1050,622,1012,645,1040,680,1040,700,1042,740,1040,760,1045,788,1082,832,1065,860,1120,905,1190,925,1205,950,1190,990,1208,1025,1210,1045,1225,1065,1110,1110,1035,1165,955,1205,920,1235,880,1275,858,1300,985,1350,1080,1390,1140,1475,1235,1520,1235]).concat(vo([600,862,660,862,690,868,720,852,760,845,800,855,850,850,890,852,918,872,935,845,965,818,1005,798,1020,795,1040,822,1075,838,1110,860,1165,870,1180,855,1195,838,1207,840])),'#c8c800',1.5);

/* axes, X10 box and the date row */
el(v,'line',{x1:1710,x2:1710,y1:795,y2:1306,stroke:'#a00000','stroke-width':2});
el(v,'line',{x1:1786,x2:1786,y1:795,y2:1306,stroke:'#a00000','stroke-width':2});
el(v,'line',{x1:0,x2:1787,y1:1282,y2:1282,stroke:'#a00000','stroke-width':2});
el(v,'line',{x1:0,x2:1787,y1:1305,y2:1305,stroke:'#a00000','stroke-width':2});
el(v,'rect',{x:1711,y:1260,width:38,height:21,fill:'#000',stroke:'#a00000','stroke-width':1});
el(v,'text',{x:1714,y:1277,'class':'axis'},'X10');
el(v,'text',{x:1730,y:1301,'class':'dayl'},'日线');
[130,204,278,413,474,534,660,725,788,917,982,1046,1178,1246,1313].forEach(function(x){el(v,'line',{x1:x,x2:x,y1:1282,y2:1286,stroke:'#a00000','stroke-width':1.5});});
[[351,'4'],[596,'5'],[853,'6'],[1110,'7'],[1380,'8']].forEach(function(d){
  el(v,'line',{x1:d[0],x2:d[0],y1:1282,y2:1305,stroke:'#a00000','stroke-width':1.5});
  el(v,'text',{x:d[0]+3,y:1302,'class':'axis'},d[1]);
});
el(v,'text',{x:6,y:1302,'class':'axis'},'2023年');
})();
```
